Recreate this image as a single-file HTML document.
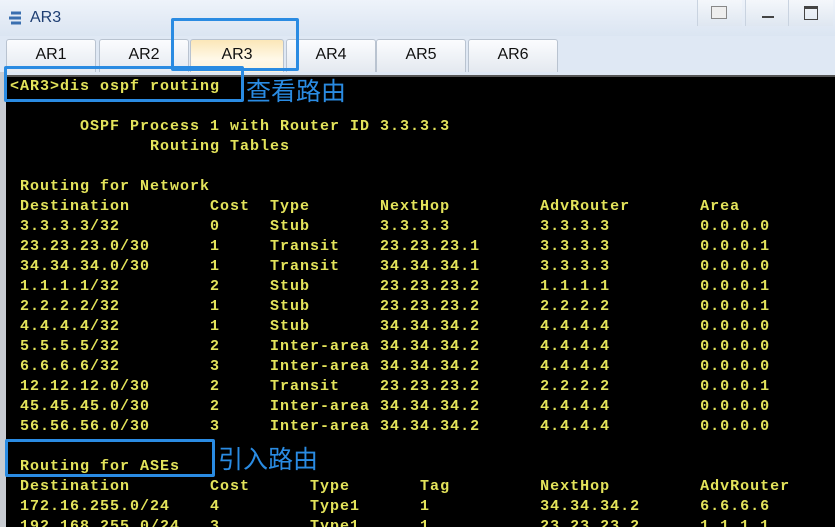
<!DOCTYPE html>
<html><head><meta charset="utf-8"><style>
html,body{margin:0;width:835px;height:527px;overflow:hidden}
body{background:#dfe8f4;position:relative;font-family:"Liberation Sans",sans-serif}
.title{position:absolute;left:0;top:0;width:835px;height:36px;background:linear-gradient(#eef3fa,#dbe5f2)}
.title .t{position:absolute;left:30px;top:9px;font-size:16px;color:#1f3f73}
.logo{position:absolute;left:8px;top:10px;width:16px;height:16px}
.wb{position:absolute;top:0;height:26px;width:44px;border-left:1px solid #c9d3e0;background:linear-gradient(#f4f7fb,#dfe7f1)}
.tab{position:absolute;top:39px;height:32px;border:1px solid #b9c3d0;border-bottom:none;border-radius:3px 3px 0 0;background:linear-gradient(#fbfcfe,#e4e9f0);font-size:16px;text-align:center;line-height:30px;color:#111}
.tab.a{background:linear-gradient(#fbe7b8,#fff8e8 60%,#fdf3dc)}
.term{position:absolute;left:6px;top:75px;width:829px;height:452px;background:#000;border-top:2px solid #555}
.lborder{position:absolute;left:0;top:72px;width:6px;height:455px;background:#c8ccd2}
pre{position:absolute;left:10px;top:77px;margin:0;font-family:"Liberation Mono",monospace;font-size:15px;letter-spacing:1px;line-height:20px;color:#e3e35a;font-weight:bold}
.box{position:absolute;border:3px solid #2a8be2;border-radius:2px}
.cn{position:absolute;font-family:"Liberation Sans","Noto Sans CJK SC",sans-serif;font-size:25px;color:#2a8be2}
</style></head><body>
<div class="title">
<svg class="logo" viewBox="0 0 16 16"><path d="M3 3h10M1 8h12M3 13h10" stroke="#3a6fb0" stroke-width="3"/></svg>
<div class="t">AR3</div>
<div class="wb" style="left:697px"><div style="position:absolute;left:13px;top:6px;width:14px;height:11px;border:1px solid #888;background:#eee"></div></div>
<div class="wb" style="left:745px"><div style="position:absolute;left:16px;top:16px;width:12px;height:2px;background:#444"></div></div>
<div class="wb" style="left:788px"><div style="position:absolute;left:15px;top:6px;width:12px;height:10px;border:1px solid #444;border-top-width:3px"></div></div>
</div>
<div class="tab" style="left:6px;width:88px">AR1</div>
<div class="tab" style="left:99px;width:88px">AR2</div>
<div class="tab a" style="left:190px;width:92px">AR3</div>
<div class="tab" style="left:286px;width:88px">AR4</div>
<div class="tab" style="left:376px;width:88px">AR5</div>
<div class="tab" style="left:468px;width:88px">AR6</div>
<div class="lborder"></div>
<div class="term"></div>
<pre>&lt;AR3&gt;dis ospf routing

       OSPF Process 1 with Router ID 3.3.3.3
              Routing Tables

 Routing for Network
 Destination        Cost  Type       NextHop         AdvRouter       Area
 3.3.3.3/32         0     Stub       3.3.3.3         3.3.3.3         0.0.0.0
 23.23.23.0/30      1     Transit    23.23.23.1      3.3.3.3         0.0.0.1
 34.34.34.0/30      1     Transit    34.34.34.1      3.3.3.3         0.0.0.0
 1.1.1.1/32         2     Stub       23.23.23.2      1.1.1.1         0.0.0.1
 2.2.2.2/32         1     Stub       23.23.23.2      2.2.2.2         0.0.0.1
 4.4.4.4/32         1     Stub       34.34.34.2      4.4.4.4         0.0.0.0
 5.5.5.5/32         2     Inter-area 34.34.34.2      4.4.4.4         0.0.0.0
 6.6.6.6/32         3     Inter-area 34.34.34.2      4.4.4.4         0.0.0.0
 12.12.12.0/30      2     Transit    23.23.23.2      2.2.2.2         0.0.0.1
 45.45.45.0/30      2     Inter-area 34.34.34.2      4.4.4.4         0.0.0.0
 56.56.56.0/30      3     Inter-area 34.34.34.2      4.4.4.4         0.0.0.0

 Routing for ASEs
 Destination        Cost      Type       Tag         NextHop         AdvRouter
 172.16.255.0/24    4         Type1      1           34.34.34.2      6.6.6.6
 192.168.255.0/24   3         Type1      1           23.23.23.2      1.1.1.1</pre>
<div class="box" style="left:171px;top:18px;width:122px;height:47px"></div>
<div class="box" style="left:4px;top:66px;width:234px;height:30px"></div>
<div class="box" style="left:5px;top:439px;width:204px;height:32px"></div>
<div class="cn" style="left:246px;top:72px">查看路由</div>
<div class="cn" style="left:218px;top:440px">引入路由</div>
</body></html>
